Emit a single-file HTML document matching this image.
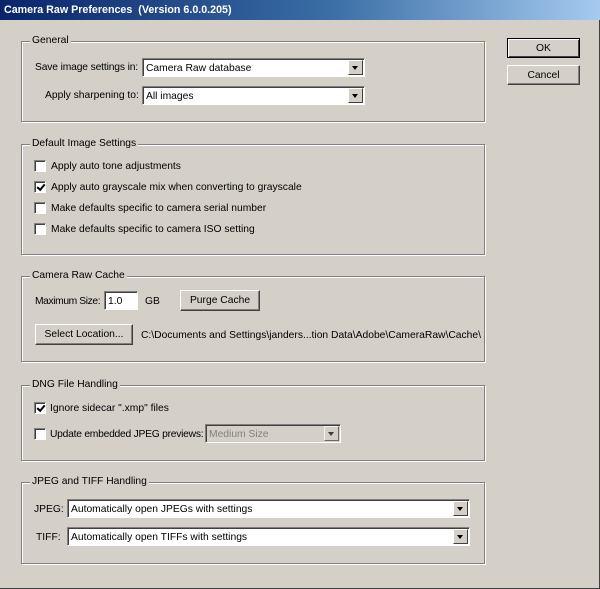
<!DOCTYPE html>
<html><head><style>
*{margin:0;padding:0;box-sizing:border-box}
body{width:600px;height:589px;background:#d4d0c8;font:10.3px "Liberation Sans",Tahoma,sans-serif;color:#000;position:relative;overflow:hidden}
.a{position:absolute;white-space:nowrap}
.title{left:0;top:0;width:600px;height:20px;background:linear-gradient(90deg,#0a246a,#3a6ea5 55%,#a6caf0);color:#fff;font-weight:bold;font-size:10.7px;padding:4px 0 0 4px}
.grp{position:absolute;border:1px solid #808080;box-shadow:1px 1px 0 #fff inset,1px 1px 0 #fff}
.lg{position:absolute;background:#d4d0c8;padding:0 2px;top:-7px;left:8px}
.sel{position:absolute;background:#fff;border:1px solid;border-color:#808080 #fff #fff #808080;box-shadow:inset 1px 1px 0 #404040;padding:4px 0 0 3px;height:19px;white-space:nowrap}
.sel .arr{position:absolute;right:1px;top:1px;width:15px;height:15px;background:#d4d0c8;border:1px solid;border-color:#fff #404040 #404040 #fff}
.sel .arr:after{content:"";position:absolute;left:3px;top:5px;border:3px solid transparent;border-top:4px solid #000;border-bottom:0}
.btn{position:absolute;background:#d4d0c8;border:1px solid;border-color:#fff #404040 #404040 #fff;box-shadow:inset -1px -1px 0 #808080;text-align:center;padding-top:4px;white-space:nowrap}
.cb{position:absolute;width:12px;height:12px;background:#fff;border:1px solid;border-color:#808080 #fff #fff #808080;box-shadow:inset 1px 1px 0 #404040}
.cb.on:after{content:"";position:absolute;width:6px;height:3px;border-left:2px solid #000;border-bottom:2px solid #000;transform:rotate(-50deg);top:2px;left:2px}
.frame{position:absolute;left:0;top:0;width:600px;height:589px;border-right:1px solid #404040;border-bottom:1px solid #404040}
</style></head><body>
<div class="frame"></div>
<div class="a title">Camera Raw Preferences &nbsp;(Version 6.0.0.205)</div>

<div class="btn" style="left:507px;top:38px;width:73px;height:20px;border:1px solid #000;box-shadow:inset 1px 1px 0 #fff,inset -1px -1px 0 #404040">OK</div>
<div class="btn" style="left:507px;top:65px;width:73px;height:20px">Cancel</div>

<div class="grp" style="left:21px;top:41px;width:464px;height:81px"><span class="lg">General</span></div>
<div class="a" style="left:35px;top:62px;letter-spacing:-0.15px">Save image settings in:</div>
<div class="sel" style="left:142px;top:58px;width:223px">Camera Raw database<span class="arr"></span></div>
<div class="a" style="left:45px;top:90px">Apply sharpening to:</div>
<div class="sel" style="left:142px;top:86px;width:223px">All images<span class="arr"></span></div>

<div class="grp" style="left:21px;top:144px;width:464px;height:111px"><span class="lg">Default Image Settings</span></div>
<div class="cb" style="left:34px;top:160px"></div><div class="a" style="left:51px;top:161px">Apply auto tone adjustments</div>
<div class="cb on" style="left:34px;top:181px"></div><div class="a" style="left:51px;top:182px">Apply auto grayscale mix when converting to grayscale</div>
<div class="cb" style="left:34px;top:202px"></div><div class="a" style="left:51px;top:203px">Make defaults specific to camera serial number</div>
<div class="cb" style="left:34px;top:223px"></div><div class="a" style="left:51px;top:224px">Make defaults specific to camera ISO setting</div>

<div class="grp" style="left:21px;top:276px;width:464px;height:86px"><span class="lg">Camera Raw Cache</span></div>
<div class="a" style="left:35px;top:296px;letter-spacing:-0.4px">Maximum Size:</div>
<div class="sel" style="left:104px;top:291px;width:34px">1.0</div>
<div class="a" style="left:145px;top:296px">GB</div>
<div class="btn" style="left:180px;top:290px;width:80px;height:21px">Purge Cache</div>
<div class="btn" style="left:35px;top:324px;width:98px;height:21px">Select Location...</div>
<div class="a" style="left:141px;top:330px">C:\Documents and Settings\janders...tion Data\Adobe\CameraRaw\Cache\</div>

<div class="grp" style="left:21px;top:385px;width:464px;height:76px"><span class="lg">DNG File Handling</span></div>
<div class="cb on" style="left:34px;top:402px"></div><div class="a" style="left:50px;top:403px">Ignore sidecar ".xmp" files</div>
<div class="cb" style="left:34px;top:428px"></div><div class="a" style="left:50px;top:429px;letter-spacing:-0.25px">Update embedded JPEG previews:</div>
<div class="sel" style="left:205px;top:424px;width:136px;color:#808080;background:#d4d0c8">Medium Size<span class="arr" style="opacity:.7"></span></div>

<div class="grp" style="left:21px;top:482px;width:464px;height:82px"><span class="lg">JPEG and TIFF Handling</span></div>
<div class="a" style="left:34px;top:504px">JPEG:</div>
<div class="sel" style="left:67px;top:499px;width:403px">Automatically open JPEGs with settings<span class="arr"></span></div>
<div class="a" style="left:36px;top:532px">TIFF:</div>
<div class="sel" style="left:67px;top:527px;width:403px">Automatically open TIFFs with settings<span class="arr"></span></div>
</body></html>
